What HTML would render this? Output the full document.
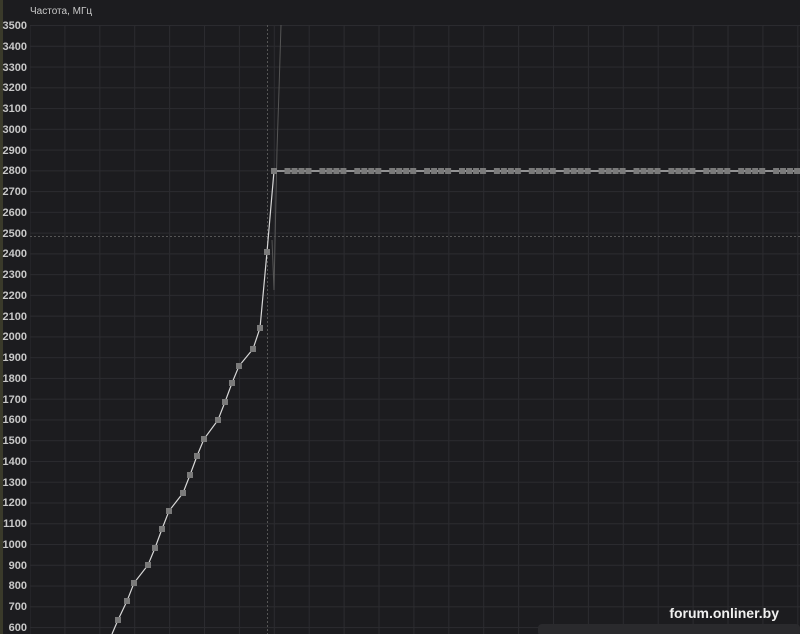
<!DOCTYPE html>
<html><head><meta charset="utf-8"><style>
html,body{margin:0;padding:0;background:#1c1c1f;width:800px;height:634px;overflow:hidden}
svg{display:block}
text{font-family:"Liberation Sans",sans-serif;font-size:11px;fill:#c8c8c8;font-weight:bold}
</style></head><body>
<svg width="800" height="634" viewBox="0 0 800 634">
<defs>
<pattern id="h" x="0" y="25" width="800" height="20.76" patternUnits="userSpaceOnUse"><rect x="0" y="0" width="800" height="1" fill="#2b2b2f"/></pattern>
<pattern id="v" x="29.5" y="0" width="34.9" height="634" patternUnits="userSpaceOnUse"><rect x="0" y="0" width="1" height="634" fill="#2b2b2f"/></pattern>
<pattern id="m" x="284.5" y="168" width="34.9" height="7" patternUnits="userSpaceOnUse">
<rect x="0" y="0" width="6" height="6" fill="#7a7a7a"/><rect x="7" y="0" width="6" height="6" fill="#7a7a7a"/><rect x="14" y="0" width="6" height="6" fill="#7a7a7a"/><rect x="21" y="0" width="6" height="6" fill="#7a7a7a"/></pattern>
</defs>
<rect width="800" height="634" fill="#1c1c1f"/>
<rect x="0" y="0" width="3" height="634" fill="#3a3a2a"/>
<rect x="30" y="25" width="770" height="609" fill="url(#h)"/>
<rect x="30" y="25" width="770" height="609" fill="url(#v)"/>
<line x1="267.5" y1="25" x2="267.5" y2="634" stroke="#555" stroke-dasharray="2,2"/>
<line x1="30" y1="236.5" x2="800" y2="236.5" stroke="#555" stroke-dasharray="2,2"/>
<polyline fill="none" stroke="#555" stroke-width="1" points="272,240 274,290 277,150 279,90 281,25"/>
<polyline fill="none" stroke="#d8d8d8" stroke-width="1.2" points="112,634 118,620 127,601 134,583 148,565 155,548 162,529 169,511 183,493 190,475 197,456 204,439 218,420 225,402 232,383 239,366 253,349 260,328 267,252 274,171 800,171"/>
<rect x="280" y="168" width="520" height="6" fill="url(#m)"/>
<g fill="#7a7a7a">
<rect x="115" y="617" width="6" height="6"/><rect x="124" y="598" width="6" height="6"/><rect x="131" y="580" width="6" height="6"/><rect x="145" y="562" width="6" height="6"/><rect x="152" y="545" width="6" height="6"/><rect x="159" y="526" width="6" height="6"/><rect x="166" y="508" width="6" height="6"/><rect x="180" y="490" width="6" height="6"/><rect x="187" y="472" width="6" height="6"/><rect x="194" y="453" width="6" height="6"/><rect x="201" y="436" width="6" height="6"/><rect x="215" y="417" width="6" height="6"/><rect x="222" y="399" width="6" height="6"/><rect x="229" y="380" width="6" height="6"/><rect x="236" y="363" width="6" height="6"/><rect x="250" y="346" width="6" height="6"/><rect x="257" y="325" width="6" height="6"/><rect x="264" y="249" width="6" height="6"/><rect x="271" y="168" width="6" height="6"/>
</g>
<text x="30" y="14" style="font-weight:normal;font-size:10px">Частота, МГц</text>
<g text-anchor="end">
<text x="27" y="29">3500</text><text x="27" y="50">3400</text><text x="27" y="71">3300</text><text x="27" y="91">3200</text><text x="27" y="112">3100</text><text x="27" y="133">3000</text><text x="27" y="154">2900</text><text x="27" y="174">2800</text><text x="27" y="195">2700</text><text x="27" y="216">2600</text><text x="27" y="237">2500</text><text x="27" y="257">2400</text><text x="27" y="278">2300</text><text x="27" y="299">2200</text><text x="27" y="320">2100</text><text x="27" y="340">2000</text><text x="27" y="361">1900</text><text x="27" y="382">1800</text><text x="27" y="403">1700</text><text x="27" y="423">1600</text><text x="27" y="444">1500</text><text x="27" y="465">1400</text><text x="27" y="486">1300</text><text x="27" y="506">1200</text><text x="27" y="527">1100</text><text x="27" y="548">1000</text><text x="27" y="569">900</text><text x="27" y="589">800</text><text x="27" y="610">700</text><text x="27" y="631">600</text>
</g>
<rect x="538" y="624" width="262" height="12" rx="4" fill="#2a2a2d"/>
<text x="779" y="618" text-anchor="end" style="font-size:14px;fill:#f0f0f0">forum.onliner.by</text>
</svg>
</body></html>
